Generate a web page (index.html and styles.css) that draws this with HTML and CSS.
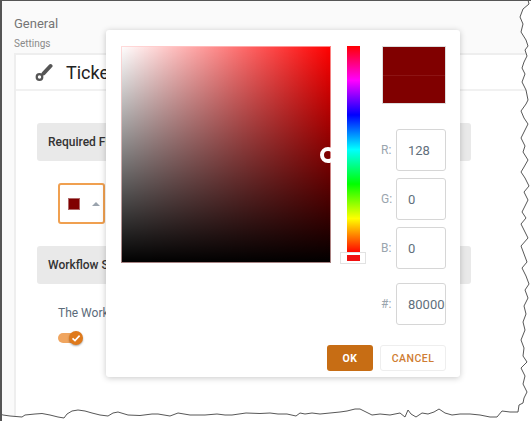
FILE: index.html
```html
<!DOCTYPE html>
<html lang="en">
<head>
<meta charset="utf-8">
<title>Ticket Settings</title>
<link rel="stylesheet" href="styles.css">
</head>
<body>
<div class="window">
  <h1 class="title">General</h1>
  <div class="crumb">Settings</div>
  <section class="card">
    <header class="card-head">
      <svg class="brush" viewBox="0 0 18 18" width="18" height="18">
        <path class="brush-handle" d="M8.500 10.500 L15.500 3"/>
        <circle class="brush-head" cx="4.500" cy="14" r="2.800"/>
      </svg>
      <span class="card-title">Ticket Settings</span>
    </header>
    <div class="card-body">
      <div class="bar">Required Fields Color</div>
      <button class="color-btn" type="button">
        <span class="swatch"></span>
        <span class="caret"></span>
      </button>
      <div class="bar">Workflow Status</div>
      <p class="note">The Workflow Status is enabled</p>
      <div class="toggle">
        <span class="track"></span>
        <span class="knob">
          <svg viewBox="0 0 14 14" width="14" height="14"><path d="M3.500 7.300 L6 9.600 L10.600 4.600"/></svg>
        </span>
      </div>
    </div>
  </section>

  <div class="dialog">
    <div class="picker">
      <div class="sat"><span class="ring"></span></div>
      <div class="hue-col">
        <div class="hue"></div>
        <div class="hue-handle"><span></span></div>
      </div>
      <div class="values">
        <div class="preview"><span></span><span></span></div>
        <label class="field"><span>R:</span><input value="128"></label>
        <label class="field"><span>G:</span><input value="0"></label>
        <label class="field"><span>B:</span><input value="0"></label>
        <label class="field hex"><span>#:</span><input value="800000"></label>
      </div>
    </div>
    <div class="actions">
      <button class="btn ok" type="button">OK</button>
      <button class="btn cancel" type="button">CANCEL</button>
    </div>
  </div>

  <svg class="torn" viewBox="0 0 531 421" width="531" height="421">
    <path class="torn-fill" d="M531 0 L528 0 L529 4 L523 9 L520 17 L523 24 L521 32 L526 40 L528 46 L525 50 L527 56 L524 62 L522 68 L525 74 L522 82 L526 90 L528 100 L526 104 L521 111 L524 118 L528 124 L525 130 L521 138 L525 146 L523 152 L528 160 L524 167 L521 172 L525 178 L529 186 L524 192 L528 200 L525 206 L522 212 L526 218 L521 224 L525 232 L528 238 L521 246 L524 254 L527 262 L522 268 L526 276 L529 284 L525 290 L528 298 L524 306 L526 314 L523 322 L525 330 L521 340 L524 348 L523 356 L527 362 L521 368 L525 376 L523 384 L527 392 L524 398 L523 403 L519 405 L518 412 L510 412 L502 411 L497 417 L490 417 L480 415 L470 414 L460 414 L452 415 L445 413 L439 409 L434 412 L428 414 L422 413 L416 417 L411 414 L408 410 L405 417 L400 413 L390 415 L380 414 L372 415 L366 412 L360 409 L355 409 L347 411 L340 412 L330 413 L320 414 L312 413 L305 414 L300 413 L296 416 L287 414 L278 414 L270 413 L260 413.500 L246 413 L232 415 L225 415 L217 414 L205 415 L190 415 L178 413 L170 416 L158 414 L152 414 L140 415.500 L128 415 L118 412 L113 413 L108 416 L100 415 L92 413 L85 411 L78 410 L72 411 L67 414 L64 418 L58 417 L50 415 L42 413.500 L35 414 L25 415 L22 417 L10 416 L3 415 L0 414 L0 421 L531 421 Z"/>
    <path class="torn-line" d="M528 0 L529 4 L523 9 L520 17 L523 24 L521 32 L526 40 L528 46 L525 50 L527 56 L524 62 L522 68 L525 74 L522 82 L526 90 L528 100 L526 104 L521 111 L524 118 L528 124 L525 130 L521 138 L525 146 L523 152 L528 160 L524 167 L521 172 L525 178 L529 186 L524 192 L528 200 L525 206 L522 212 L526 218 L521 224 L525 232 L528 238 L521 246 L524 254 L527 262 L522 268 L526 276 L529 284 L525 290 L528 298 L524 306 L526 314 L523 322 L525 330 L521 340 L524 348 L523 356 L527 362 L521 368 L525 376 L523 384 L527 392 L524 398 L523 403 L519 405 L518 412 L510 412 L502 411 L497 417 L490 417 L480 415 L470 414 L460 414 L452 415 L445 413 L439 409 L434 412 L428 414 L422 413 L416 417 L411 414 L408 410 L405 417 L400 413 L390 415 L380 414 L372 415 L366 412 L360 409 L355 409 L347 411 L340 412 L330 413 L320 414 L312 413 L305 414 L300 413 L296 416 L287 414 L278 414 L270 413 L260 413.500 L246 413 L232 415 L225 415 L217 414 L205 415 L190 415 L178 413 L170 416 L158 414 L152 414 L140 415.500 L128 415 L118 412 L113 413 L108 416 L100 415 L92 413 L85 411 L78 410 L72 411 L67 414 L64 418 L58 417 L50 415 L42 413.500 L35 414 L25 415 L22 417 L10 416 L3 415 L0 414"/>
  </svg>
</div>
</body>
</html>
```

FILE: styles.css
```css
* { box-sizing: border-box; }
html, body { margin: 0; padding: 0; }
body {
  width: 531px;
  height: 421px;
  overflow: hidden;
  background: #fff;
  font-family: Roboto, "Liberation Sans", sans-serif;
}
.window {
  position: relative;
  width: 531px;
  height: 421px;
  overflow: hidden;
  background: #fafafa;
  border-left: 2px solid #555;
  border-top: 1px solid #555;
  padding: 15px 0 0 12px;
}
.title {
  margin: 0;
  font-size: 13px;
  line-height: 15px;
  font-weight: 400;
  color: #757575;
}
.crumb {
  margin-top: 6px;
  font-size: 10px;
  line-height: 14px;
  color: #8a8a8a;
}
.card {
  margin-top: 2px;
  width: 560px;
  height: 380px;
  background: #fff;
  border: 2px solid #eee;
  border-right: 0;
}
.card-head {
  display: flex;
  align-items: center;
  height: 36px;
  padding-left: 19px;
  border-bottom: 2px solid #f1f1f1;
}
.brush { flex: none; }
.brush-handle { stroke: #555; stroke-width: 4; stroke-linecap: round; fill: none; }
.brush-head { stroke: #555; stroke-width: 2.200; fill: none; }
.card-title {
  margin-left: 13px;
  font-size: 18px;
  color: #222;
}
.card-body { padding: 32px 0 0 21px; }
.bar {
  width: 434px;
  height: 38px;
  padding-left: 11px;
  border-radius: 3px;
  background: #e9e9e9;
  font-size: 12px;
  font-weight: 500;
  line-height: 38px;
  color: #333;
}
.color-btn {
  display: flex;
  align-items: center;
  width: 47px;
  height: 41px;
  margin: 22px 0 22px 21px;
  padding: 0 0 0 8px;
  background: #fff;
  border: 2px solid #f0a050;
  border-radius: 3px;
}
.swatch { width: 12px; height: 12px; background: #800000; border: 1px solid #b06a6a; }
.caret {
  margin-left: 12px;
  border-left: 4px solid transparent;
  border-right: 4px solid transparent;
  border-bottom: 4px solid #9aa3ad;
}
.note {
  margin: 21px 0 0 21px;
  font-size: 12px;
  line-height: 16px;
  color: #5b6b7a;
}
.toggle {
  position: relative;
  width: 26px;
  height: 15px;
  margin: 10px 0 0 21px;
}
.track {
  display: block;
  width: 22px;
  height: 10px;
  margin-top: 2px;
  border-radius: 5px;
  background: #f0a55f;
  position: absolute;
  left: 0;
  top: 0;
}
.knob {
  position: absolute;
  left: 11px;
  top: 0;
  width: 14px;
  height: 14px;
  border-radius: 50%;
  background: #df7a1c;
  box-shadow: 0 1px 2px rgba(0, 0, 0, .35);
}
.knob svg { display: block; }
.knob path { fill: none; stroke: #fff; stroke-width: 1.600; }
.dialog {
  position: absolute;
  left: 104px;
  top: 29px;
  width: 354px;
  height: 347px;
  display: flex;
  flex-direction: column;
  justify-content: space-between;
  padding: 16px 14px 6px 15px;
  background: #fff;
  border-radius: 3px;
  box-shadow: 0 1px 6px rgba(0, 0, 0, .22);
}
.picker { display: flex; align-items: flex-start; }
.sat {
  position: relative;
  flex: none;
  width: 210px;
  height: 217px;
  overflow: hidden;
  background:
    linear-gradient(to top, #000, rgba(0, 0, 0, 0)),
    linear-gradient(to right, #fff, rgba(255, 255, 255, 0)),
    #f00;
  outline: 1px solid rgba(255, 200, 200, .65);
  outline-offset: -1px;
}
.ring {
  position: absolute;
  left: 199px;
  top: 101px;
  width: 16px;
  height: 16px;
  border: 4px solid #fff;
  border-radius: 50%;
}
.hue-col {
  flex: none;
  width: 26px;
  margin-left: 9px;
  display: flex;
  flex-direction: column;
  align-items: center;
}
.hue {
  width: 13px;
  height: 207px;
  background: linear-gradient(to bottom, #f00 0%, #f0f 16.670%, #00f 33.330%, #0ff 50%, #0f0 66.670%, #ff0 83.330%, #f00 100%);
}
.hue-handle {
  width: 26px;
  height: 12px;
  margin-top: -1px;
  padding-top: 2px;
  background: #fff;
  border: 1px solid #e2e2e2;
  text-align: center;
}
.hue-handle span {
  display: block;
  width: 13px;
  height: 6px;
  margin: 0 auto;
  background: #f01010;
}
.values {
  flex: none;
  width: 65px;
  margin-left: 15px;
  display: flex;
  flex-direction: column;
}
.preview {
  width: 64px;
  height: 58px;
  margin: 0 0 25px 1px;
  border: 1px solid #ddd;
  display: flex;
  flex-direction: column;
}
.preview span { flex: 1; background: #800000; }
.preview span + span { border-top: 1px solid #8c1414; }
.field {
  display: flex;
  align-items: center;
  justify-content: space-between;
  height: 42px;
  margin-bottom: 7px;
  font-size: 12px;
  color: #9aa5ae;
}
.field.hex { margin-top: 7px; }
.field input {
  width: 50px;
  height: 42px;
  padding: 0 0 0 11px;
  border: 1px solid #d6d6d6;
  border-radius: 3px;
  font: 13px Roboto, "Liberation Sans", sans-serif;
  color: #5f6f7c;
  background: #fff;
}
.actions {
  display: flex;
  justify-content: flex-end;
  gap: 7px;
}
.btn {
  height: 26px;
  padding: 0;
  border-radius: 3px;
  font: 500 10.500px Roboto, "Liberation Sans", sans-serif;
  letter-spacing: .5px;
}
.ok { width: 46px; background: #c76d14; border: 0; color: #fff; font-weight: 700; }
.cancel { width: 66px; background: #fff; border: 1px solid #eee; color: #cf7d33; }
.torn {
  position: absolute;
  left: -2px;
  top: -1px;
}
.torn-fill { fill: #fff; }
.torn-line { fill: none; stroke: #444; stroke-width: .9; }
```
